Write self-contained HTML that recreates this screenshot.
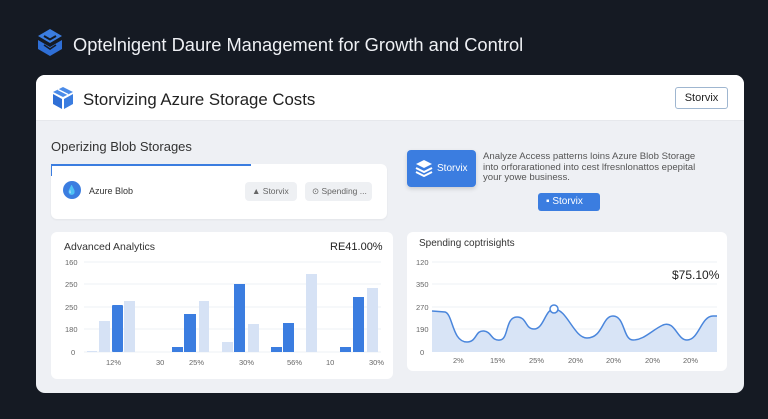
<!DOCTYPE html>
<html><head><meta charset="utf-8"><style>
*{margin:0;padding:0;box-sizing:border-box}
body{width:768px;height:419px;background:#151a23;font-family:"Liberation Sans",sans-serif;position:relative;overflow:hidden}
.abs{position:absolute}
</style></head><body>
<svg class="abs" style="left:36px;top:28px" width="28" height="30" viewBox="0 0 28 30">
<path d="M14 1 L26 8 L14 15 L2 8Z" fill="#3b7de0"/>
<path d="M2 12 L14 19 L26 12 L26 21 L14 28 L2 21Z" fill="#2f6fd6"/>
<path d="M8 8 L14 11.5 L20 8" stroke="#151a23" stroke-width="2" fill="none"/>
<path d="M8 17 L14 21 L20 17" stroke="#151a23" stroke-width="1.6" fill="none"/>
</svg>
<div class="abs" style="left:73px;top:34px;color:#eef0f4;font-size:18.3px">Optelnigent Daure Management for Growth and Control</div>

<div class="abs" style="left:36px;top:75px;width:708px;height:318px;background:#eef0f4;border-radius:9px;overflow:hidden">
  <div style="height:46px;background:#fff;border-bottom:1px solid #e6e8ec"></div>
</div>
<svg class="abs" style="left:51px;top:86px" width="24" height="24" viewBox="0 0 24 24">
<path d="M12 1 L22 6 L12 11 L2 6Z" fill="#4a8be8"/>
<path d="M2 8 L11 13 L11 23 L2 18Z" fill="#2f6fd6"/>
<path d="M13 13 L22 8 L22 18 L13 23Z" fill="#3b7de0"/>
<path d="M7 3.5 L17 8.5" stroke="#fff" stroke-width="1.4"/>
</svg>
<div class="abs" style="left:83px;top:90px;font-size:16.8px;color:#222">Storvizing Azure Storage Costs</div>
<div class="abs" style="left:675px;top:87px;width:53px;height:22px;border:1px solid #9fb6d0;border-radius:3px;font-size:11px;color:#222;text-align:center;line-height:20px;background:#fff">Storvix</div>

<div class="abs" style="left:51px;top:139px;font-size:13px;color:#333">Operizing Blob Storages</div>
<div class="abs" style="left:51px;top:164px;width:336px;height:55px;background:#fff;border-radius:6px;box-shadow:0 1px 2px rgba(0,0,0,.05)"></div>
<div class="abs" style="left:51px;top:164px;width:200px;height:2px;background:#3b7de0"></div>
<div class="abs" style="left:51px;top:164px;width:1px;height:12px;background:#3b7de0"></div>
<div class="abs" style="left:63px;top:181px;width:18px;height:18px;border-radius:50%;background:#3b7de0;color:#fff;font-size:9px;text-align:center;line-height:18px">💧</div>
<div class="abs" style="left:89px;top:186px;font-size:9px;color:#333">Azure Blob</div>
<div class="abs" style="left:245px;top:182px;width:52px;height:19px;background:#eef0f3;border-radius:4px;font-size:8.5px;color:#666;line-height:19px;padding-left:7px">▲ Storvix</div>
<div class="abs" style="left:305px;top:182px;width:67px;height:19px;background:#eef0f3;border-radius:4px;font-size:8.5px;color:#666;line-height:19px;padding-left:7px">⊙ Spending ...</div>

<div class="abs" style="left:407px;top:150px;width:69px;height:37px;background:#3b7de0;border-radius:4px;box-shadow:0 2px 4px rgba(0,0,0,.15)"></div>
<svg class="abs" style="left:415px;top:159px" width="18" height="18" viewBox="0 0 18 18"><path d="M9 1 L17 5 L9 9 L1 5Z" fill="#fff"/><path d="M1 9 L9 13 L17 9" stroke="#fff" stroke-width="2" fill="none"/><path d="M1 13 L9 17 L17 13" stroke="#fff" stroke-width="2" fill="none"/></svg>
<div class="abs" style="left:437px;top:163px;font-size:10px;color:#fff">Storvix</div>
<div class="abs" style="left:483px;top:152px;font-size:9.6px;line-height:10.5px;color:#555;width:228px">Analyze Access patterns loins Azure Blob Storage into orforarationed into cest lfresnlonattos epepital your yowe business.</div>
<div class="abs" style="left:538px;top:193px;width:62px;height:18px;background:#3b7de0;border-radius:3px;font-size:10px;color:#fff;line-height:18px;padding-left:8px">▪ Storvix</div>

<!-- Bar chart -->
<div class="abs" style="left:51px;top:232px;width:342px;height:147px;background:#fff;border-radius:6px"></div>
<div class="abs" style="left:64px;top:241px;font-size:10.5px;color:#333">Advanced Analytics</div>
<div class="abs" style="left:330px;top:241px;font-size:11px;color:#222">RE41.00%</div>
<svg class="abs" style="left:51px;top:232px" width="342" height="147">
<g stroke="#eef0f4" stroke-width="1"><line x1="33" x2="330" y1="30" y2="30"/><line x1="33" x2="330" y1="52" y2="52"/><line x1="33" x2="330" y1="75" y2="75"/><line x1="33" x2="330" y1="97" y2="97"/><line x1="33" x2="330" y1="120" y2="120"/></g>
<g font-size="7.5" fill="#666" font-family="Liberation Sans"><text x="14" y="33">160</text><text x="14" y="55">250</text><text x="14" y="78">250</text><text x="14" y="100">180</text><text x="20" y="123">0</text>
<text x="55" y="133">12%</text><text x="105" y="133">30</text><text x="138" y="133">25%</text><text x="188" y="133">30%</text><text x="236" y="133">56%</text><text x="275" y="133">10</text><text x="318" y="133">30%</text></g>
<g fill="#d6e2f5"><rect x="36" y="119" width="10" height="1"/><rect x="48" y="89" width="11" height="31"/><rect x="73" y="69" width="11" height="51"/><rect x="148" y="69" width="10" height="51"/><rect x="171" y="110" width="11" height="10"/><rect x="197" y="92" width="11" height="28"/><rect x="255" y="42" width="11" height="78"/><rect x="316" y="56" width="11" height="64"/></g>
<g fill="#3b7de0"><rect x="61" y="73" width="11" height="47" rx="1"/><rect x="121" y="115" width="11" height="5"/><rect x="133" y="82" width="12" height="38"/><rect x="183" y="52" width="11" height="68"/><rect x="220" y="115" width="11" height="5"/><rect x="232" y="91" width="11" height="29"/><rect x="289" y="115" width="11" height="5"/><rect x="302" y="65" width="11" height="55"/></g>
</svg>

<!-- Line chart -->
<div class="abs" style="left:407px;top:232px;width:320px;height:139px;background:#fff;border-radius:6px"></div>
<div class="abs" style="left:419px;top:238px;font-size:10px;color:#333">Spending coptrisights</div>
<div class="abs" style="left:672px;top:268px;font-size:12px;color:#222">$75.10%</div>
<svg class="abs" style="left:407px;top:232px" width="320" height="139">
<g stroke="#eef0f4"><line x1="25" x2="310" y1="30" y2="30"/><line x1="25" x2="310" y1="52" y2="52"/><line x1="25" x2="310" y1="75" y2="75"/><line x1="25" x2="310" y1="97" y2="97"/></g>
<g font-size="7.5" fill="#666" font-family="Liberation Sans"><text x="9" y="33">120</text><text x="9" y="55">350</text><text x="9" y="78">270</text><text x="9" y="100">190</text><text x="13" y="123">0</text>
<text x="46" y="131">2%</text><text x="83" y="131">15%</text><text x="122" y="131">25%</text><text x="161" y="131">20%</text><text x="199" y="131">20%</text><text x="238" y="131">20%</text><text x="276" y="131">20%</text></g>
<path d="M25 79 L38 80 C46 82 45 110 60 110 C70 110 68 98 77 99 C85 100 84 109 93 108 C102 107 98 85 110 85 C120 85 118 97 127 97 C137 97 138 77 147 77 C160 77 167 106 180 106 C196 106 195 84 206 84 C218 84 216 108 226 108 C237 108 245 98 256 93 C268 88 270 108 280 108 C292 108 294 84 306 84 L310 84 L310 120 L25 120Z" fill="#d8e4f6"/>
<path d="M25 79 L38 80 C46 82 45 110 60 110 C70 110 68 98 77 99 C85 100 84 109 93 108 C102 107 98 85 110 85 C120 85 118 97 127 97 C137 97 138 77 147 77 C160 77 167 106 180 106 C196 106 195 84 206 84 C218 84 216 108 226 108 C237 108 245 98 256 93 C268 88 270 108 280 108 C292 108 294 84 306 84 L310 84" fill="none" stroke="#4a86dc" stroke-width="1.5"/>
<circle cx="147" cy="77" r="4" fill="#fff" stroke="#4a86dc" stroke-width="1.5"/>
</svg>
</body></html>
